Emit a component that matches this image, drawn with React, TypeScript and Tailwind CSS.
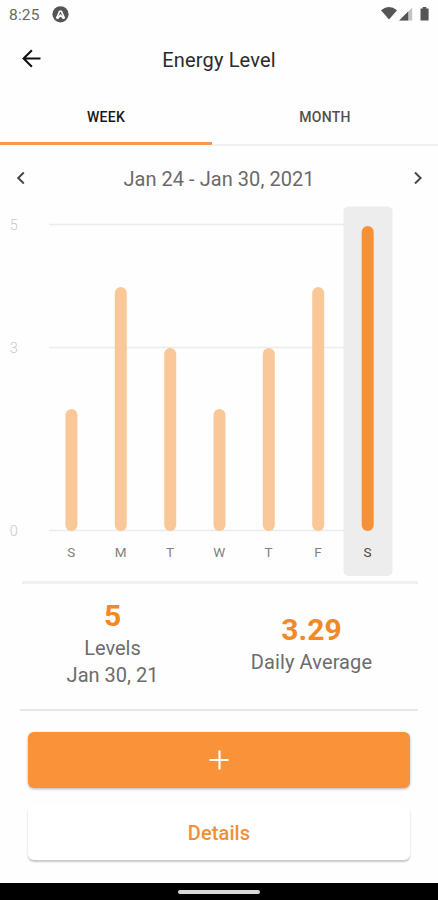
const days = [
  { label: 'S', value: 2, x: 71.4 },
  { label: 'M', value: 4, x: 120.8 },
  { label: 'T', value: 3, x: 170.2 },
  { label: 'W', value: 2, x: 219.5 },
  { label: 'T', value: 3, x: 268.8 },
  { label: 'F', value: 4, x: 318.2 },
  { label: 'S', value: 5, x: 367.7 },
];

const ticks = [
  { label: '5', y: 18.5 },
  { label: '3', y: 141.5 },
  { label: '0', y: 324.5 },
];

function StatusBar() {
  return (
    <div className="flex h-7 items-center pl-[9px] pr-[6px] text-[#666]">
      <span className="w-[43px] pt-px text-[15.5px] leading-7 tracking-[0.2px]">8:25</span>
      <svg width="17" height="17" viewBox="0 0 17 17">
        <circle cx="8.5" cy="8.3" r="8.1" fill="#555" />
        <path d="M4.7 11.8 7.7 5.2h1.6l3 6.6-1.2.5L8.5 9l-2.6 3.3z" fill="none" stroke="#fff" strokeWidth="1.6" strokeLinejoin="round" />
      </svg>
      <svg className="ml-auto" width="51" height="16" viewBox="0 0 51 16">
        <path d="M0 4.3Q8-2.1 16 4.3L8 13.5z" fill="#555" />
        <path d="M18.2 14.5 31.2 1.5v13z" fill="#c4c4c4" />
        <path d="M18.2 14.5 27.2 5.5v9z" fill="#555" />
        <path d="M39.5 2.5h2.2V1h3.6v1.5h2.3v12h-8.1z" fill="#555" />
      </svg>
    </div>
  );
}

function Chart() {
  return (
    <svg className="block shrink-0" width="438" height="370" viewBox="0 0 438 370">
      {ticks.map((t) => (
        <g key={t.label}>
          <text x="13.7" y={t.y + 5} textAnchor="middle" fontSize="14.5" fill="#c8c8c8" fontWeight="300">{t.label}</text>
          <path d={`M49 ${t.y}H344`} stroke="#ececec" strokeWidth="1.6" />
        </g>
      ))}
      <rect x="343.5" y="0.5" width="49" height="369.5" rx="5" fill="#ededed" />
      {days.map((d, i) => {
        const top = 325 - d.value * 61;
        const active = i === 6;
        return (
          <g key={i}>
            <rect x={d.x - 6} y={top} width="12" height={325 - top} rx="6" fill={active ? '#f89136' : '#fac898'} />
            <text x={d.x - 0.2} y="351" textAnchor="middle" fontSize="13.5" fill={active ? '#484848' : '#808080'}>{d.label}</text>
          </g>
        );
      })}
    </svg>
  );
}

export default function App() {
  return (
    <div className="flex h-[900px] w-[438px] flex-col overflow-hidden bg-[#fefefe] font-['Roboto',sans-serif]">
      <StatusBar />
      <header className="grid h-[62px] shrink-0 grid-cols-[60px_1fr_60px] items-center">
        <svg className="ml-[22px]" width="20" height="20" viewBox="0 0 20 20" fill="none" stroke="#111" strokeWidth="2.1">
          <path d="M18.5 9.5H2.5M9.9 1.2 1.6 9.5l8.3 8.3" />
        </svg>
        <h1 className="pt-[2px] text-center text-[20px] leading-7 tracking-[0.15px] text-[#2a2a2a]">Energy Level</h1>
      </header>
      <div className="flex h-14 shrink-0 text-center text-[14px] font-medium leading-[54px] tracking-[0.25px]">
        <div className="h-[55px] w-[212px] border-b-[3px] border-[#f99755] text-[#181818]">WEEK</div>
        <div className="flex-1 border-b-2 border-[#f1f0f0] text-[#505050]">MONTH</div>
      </div>
      <div className="flex h-[60px] shrink-0 items-center justify-between px-4">
        <svg width="9" height="14" viewBox="0 0 9 14" fill="none" stroke="#484848" strokeWidth="2" className="mt-[3px]">
          <path d="M7.8 1.5 2.2 7l5.6 5.5" />
        </svg>
        <span className="pt-[5px] text-[20px] leading-7 tracking-[0.05px] text-[#6a6a6a]">Jan 24 - Jan 30, 2021</span>
        <svg width="9" height="14" viewBox="0 0 9 14" fill="none" stroke="#484848" strokeWidth="2" className="mt-[3px]">
          <path d="m2 1.5 5.6 5.5L2 12.5" />
        </svg>
      </div>
      <Chart />
      <div className="ml-[22px] mr-[20px] mt-[5px] h-[3px] shrink-0 bg-[#f0f0f0]" />
      <div className="flex h-[125px] shrink-0 text-center text-[20px] leading-[27px] text-[#6c6c6c]">
        <div className="w-[225px] pt-[14px]">
          <div className="mb-[2px] text-[30px] font-bold leading-[35px] text-[#f18924]">5</div>
          <div>Levels</div>
          <div>Jan 30, 21</div>
        </div>
        <div className="w-[173px] pt-[28px]">
          <div className="mb-[2px] text-[30px] font-bold leading-[35px] text-[#f18924]">3.29</div>
          <div className="tracking-[0.1px]">Daily Average</div>
        </div>
      </div>
      <div className="mx-5 h-[2px] shrink-0 bg-[#e7e7e7]" />
      <button className="mx-[28px] mt-[21px] flex h-14 shrink-0 items-center justify-center rounded-[6px] bg-[#f99239] shadow-[0_1px_3px_rgba(0,0,0,0.3)]">
        <svg width="20" height="20" viewBox="0 0 20 20" fill="none" stroke="#fff" strokeWidth="2.2">
          <path d="M10.5 .5v19M.5 10h19" />
        </svg>
      </button>
      <button className="mx-[28px] mt-[17px] h-[55px] shrink-0 rounded-[6px] bg-white pt-px text-[20px] font-medium tracking-[0.1px] text-[#f08e3c] shadow-[0_2px_2px_rgba(0,0,0,0.22)]">
        Details
      </button>
      <div className="mt-auto flex h-[17px] shrink-0 items-center justify-center bg-black pt-[1px]">
        <div className="h-[4px] w-[82px] rounded-full bg-[#d8d8d8]" />
      </div>
    </div>
  );
}
